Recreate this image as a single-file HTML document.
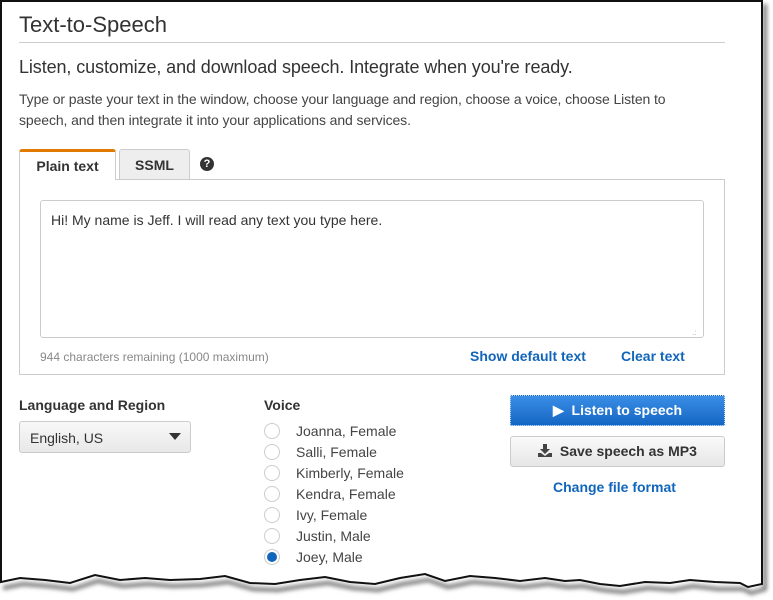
<!DOCTYPE html>
<html><head><style>
*{box-sizing:border-box;margin:0;padding:0}
body{width:773px;height:600px;background:#fff;position:relative;overflow:hidden;font-family:"Liberation Sans",Arial,sans-serif;color:#333}
.a{position:absolute}
h1{font-weight:normal;font-size:22px;color:#333}
.link{color:#1166bb;font-weight:bold;font-size:14px}
.radio{width:16px;height:16px;border:1px solid #ccc;border-radius:50%;background:#fff}
.vt{font-size:14px;color:#444}
</style></head><body>
<svg class="a" style="left:0;top:0" width="773" height="600">
<defs><filter id="b"><feGaussianBlur stdDeviation="2"/></filter></defs>
<path d="M0 584 L20 580 L45 582 L70 585 L95 577 L120 582 L145 580 L170 582 L200 581 L225 578 L250 585 L275 586 L300 582 L325 579 L350 584 L375 586 L400 580 L425 576 L445 583 L470 578 L495 580 L520 583 L545 580 L565 583 L580 582 L600 586 L620 588 L645 584 L670 586 L690 582 L715 585 L740 585 L748 589 L762 585 L762 0" fill="none" stroke="#777" stroke-width="4" filter="url(#b)" transform="translate(3,4)"/>
<path d="M1 1 L762 1 L762 584 L748 587 L740 583 L715 582 L690 580 L670 583 L645 582 L620 586 L600 584 L580 580 L565 581 L545 578 L520 581 L495 578 L470 576 L445 581 L425 574 L400 578 L375 584 L350 582 L325 577 L300 580 L275 584 L250 583 L225 576 L200 579 L170 580 L145 578 L120 580 L95 575 L70 583 L45 580 L20 578 L1 582 Z" fill="#fff" stroke="#111" stroke-width="2"/>
</svg>
<h1 class="a" style="left:19px;top:12px">Text-to-Speech</h1>
<div class="a" style="left:19px;top:42px;width:706px;height:1px;background:#ccc"></div>
<div class="a" style="left:19px;top:57px;font-size:18px;color:#333;letter-spacing:-0.1px">Listen, customize, and download speech. Integrate when you're ready.</div>
<div class="a" style="left:19px;top:89px;font-size:14px;line-height:21px;color:#444;width:680px;letter-spacing:-0.1px">Type or paste your text in the window, choose your language and region, choose a voice, choose Listen to speech, and then integrate it into your applications and services.</div>
<div class="a" style="left:19px;top:179px;width:706px;height:196px;border:1px solid #ccc"></div>
<div class="a" style="left:19px;top:149px;width:97px;height:31px;border:1px solid #ccc;border-top:3px solid #e07b00;border-bottom:none;background:#fff;border-radius:3px 3px 0 0;font-weight:bold;font-size:14px;text-align:center;line-height:28px">Plain text</div>
<div class="a" style="left:119px;top:149px;width:71px;height:30px;border:1px solid #ccc;border-bottom:none;background:#eee;border-radius:3px 3px 0 0;font-weight:bold;font-size:14px;text-align:center;line-height:30px">SSML</div>
<div class="a" style="left:200px;top:157px;width:14px;height:14px;border-radius:50%;background:#333;color:#fff;font-size:11px;font-weight:bold;text-align:center;line-height:14px">?</div>
<div class="a" style="left:40px;top:200px;width:664px;height:138px;border:1px solid #ccc;border-radius:3px;font-size:14px;color:#333;padding:11px 10px">Hi! My name is Jeff. I will read any text you type here.</div>
<div class="a" style="left:692px;top:328px;font-size:8px;color:#aaa">.:</div>
<div class="a" style="left:40px;top:350px;font-size:12px;color:#888">944 characters remaining (1000 maximum)</div>
<div class="a link" style="left:470px;top:348px">Show default text</div>
<div class="a link" style="left:621px;top:348px">Clear text</div>
<div class="a" style="left:19px;top:397px;font-size:14px;font-weight:bold">Language and Region</div>
<div class="a" style="left:19px;top:421px;width:172px;height:32px;border:1px solid #ccc;border-radius:3px;background:linear-gradient(#f8f8f8,#e8e8e8);font-size:14px;padding:8px 10px">English, US</div>
<div class="a" style="left:169px;top:433px;border-left:6px solid transparent;border-right:6px solid transparent;border-top:7px solid #333"></div>
<div class="a" style="left:264px;top:397px;font-size:14px;font-weight:bold">Voice</div>
<div class="a radio" style="left:264px;top:423px"></div><div class="a vt" style="left:296px;top:423px">Joanna, Female</div>
<div class="a radio" style="left:264px;top:444px"></div><div class="a vt" style="left:296px;top:444px">Salli, Female</div>
<div class="a radio" style="left:264px;top:465px"></div><div class="a vt" style="left:296px;top:465px">Kimberly, Female</div>
<div class="a radio" style="left:264px;top:486px"></div><div class="a vt" style="left:296px;top:486px">Kendra, Female</div>
<div class="a radio" style="left:264px;top:507px"></div><div class="a vt" style="left:296px;top:507px">Ivy, Female</div>
<div class="a radio" style="left:264px;top:528px"></div><div class="a vt" style="left:296px;top:528px">Justin, Male</div>
<div class="a radio" style="left:264px;top:549px;padding:2px"><div style="width:10px;height:10px;border-radius:50%;background:#1166bb"></div></div><div class="a vt" style="left:296px;top:549px">Joey, Male</div>
<div class="a" style="left:510px;top:395px;width:215px;height:31px;border:1px dotted #cde;border-radius:2px;background:linear-gradient(#3a8ee6,#1566c4);color:#fff;font-weight:bold;font-size:14px;text-align:center;line-height:29px">&#9654;&nbsp; Listen to speech</div>
<div class="a" style="left:510px;top:436px;width:215px;height:31px;border:1px solid #ccc;border-radius:3px;background:linear-gradient(#fafafa,#e6e6e6);color:#333;font-weight:bold;font-size:14px;text-align:center;line-height:29px"><svg width="14" height="13" style="vertical-align:-1px" viewBox="0 0 14 13"><path d="M5 0h4v5h3l-5 5-5-5h3z" fill="#444"/><path d="M0 9h3l4 3 4-3h3v4H0z" fill="#444"/></svg>&nbsp; Save speech as MP3</div>
<div class="a link" style="left:553px;top:479px">Change file format</div>
</body></html>
